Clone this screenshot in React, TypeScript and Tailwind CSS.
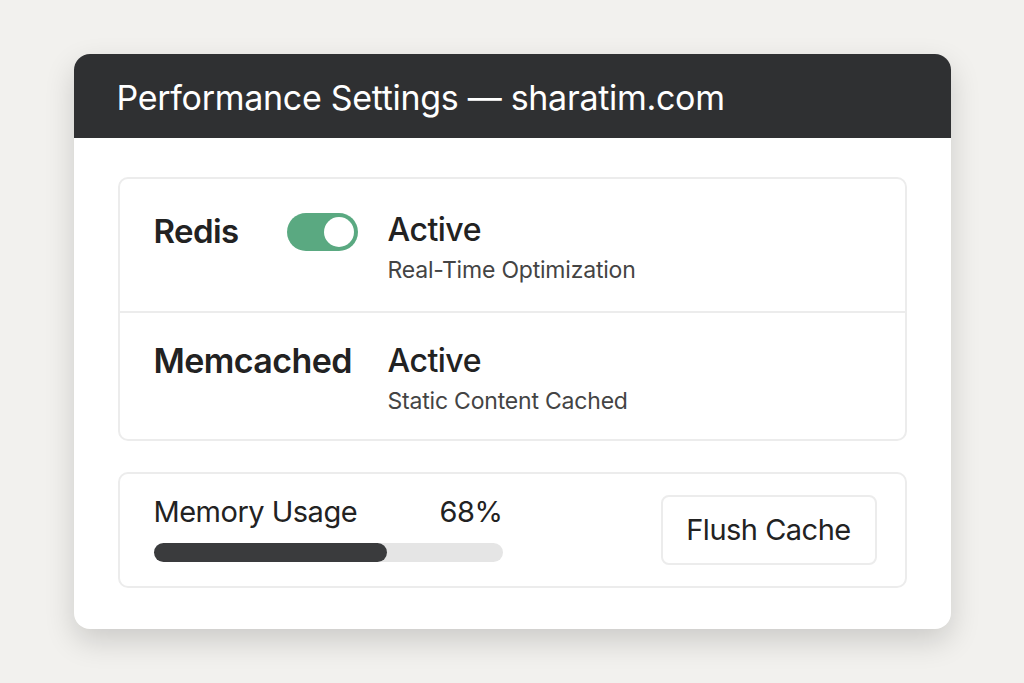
import React from 'react';

const font = { fontFamily: 'Inter, "Noto Sans", sans-serif' };

function Toggle({ on }: { on: boolean }) {
    return (
        <div className={`flex h-[38px] w-[71px] items-center rounded-full px-[4px] ${on ? 'justify-end bg-[#5aa981]' : 'justify-start bg-gray-300'}`}>
            <div className="h-[30px] w-[30px] rounded-full bg-white" />
        </div>
    );
}

export default function App() {
    const usage = 68;

    return (
        <div className="flex h-[683px] w-full items-start justify-center bg-[#f2f1ee] pt-[54px]" style={font}>
            <div className="w-[877px] overflow-hidden rounded-[16px] bg-white shadow-[0_12px_30px_rgba(0,0,0,0.16)]">
                {/* Header */}
                <div className="flex h-[84px] items-center bg-[#2f3032] px-[43px]">
                    <h1 className="pt-[2px] text-[34px] font-normal tracking-[-0.3px] text-white">Performance Settings — sharatim.com</h1>
                </div>

                <div className="flex flex-col gap-[31px] px-[44px] pb-[41px] pt-[39px]">
                    {/* Cache services */}
                    <div className="flex flex-col rounded-[10px] border-2 border-[#ececec]">
                        <div className="flex h-[134px] items-start border-b-2 border-[#ececec] pl-[34px] pt-[31px]">
                            <div className="-mt-[3px] flex w-[234px] items-center">
                                <span className="w-[133px] text-[33px] font-semibold tracking-[-0.6px] text-[#222]">Redis</span>
                                <Toggle on />
                            </div>
                            <div className="flex flex-col">
                                <span className="text-[32px] font-medium leading-[40px] tracking-[-0.5px] text-[#222]">Active</span>
                                <span className="mt-[3px] text-[23px] tracking-[-0.2px] text-[#444]">Real-Time Optimization</span>
                            </div>
                        </div>
                        <div className="flex h-[126px] items-start pl-[34px] pt-[28px]">
                            <div className="w-[234px]">
                                <span className="text-[34px] font-semibold leading-[40px] tracking-[-0.6px] text-[#222]">Memcached</span>
                            </div>
                            <div className="flex flex-col">
                                <span className="text-[32px] font-medium leading-[40px] tracking-[-0.5px] text-[#222]">Active</span>
                                <span className="mt-[3px] text-[23px] tracking-[-0.2px] text-[#444]">Static Content Cached</span>
                            </div>
                        </div>
                    </div>

                    {/* Memory */}
                    <div className="flex h-[116px] items-center justify-between rounded-[10px] border-2 border-[#ececec] pl-[34px] pr-[28px]">
                        <div className="flex w-[349px] flex-col gap-[15px]">
                            <div className="-mt-[3px] flex items-center justify-between text-[29px] leading-[32px] text-[#222]">
                                <span className="tracking-[-0.5px]">Memory Usage</span>
                                <span className="tracking-[-0.5px]">{usage}%</span>
                            </div>
                            <div className="h-[19px] w-full rounded-full bg-[#e5e5e5]">
                                <div className="h-full rounded-full bg-[#3a3b3d]" style={{ width: `${(233 / 349) * 100}%` }} />
                            </div>
                        </div>
                        <button className="h-[70px] w-[216px] rounded-[8px] border-2 border-[#ececec] bg-white text-[29px] tracking-[-0.5px] text-[#222]">
                            Flush Cache
                        </button>
                    </div>
                </div>
            </div>
        </div>
    );
}
